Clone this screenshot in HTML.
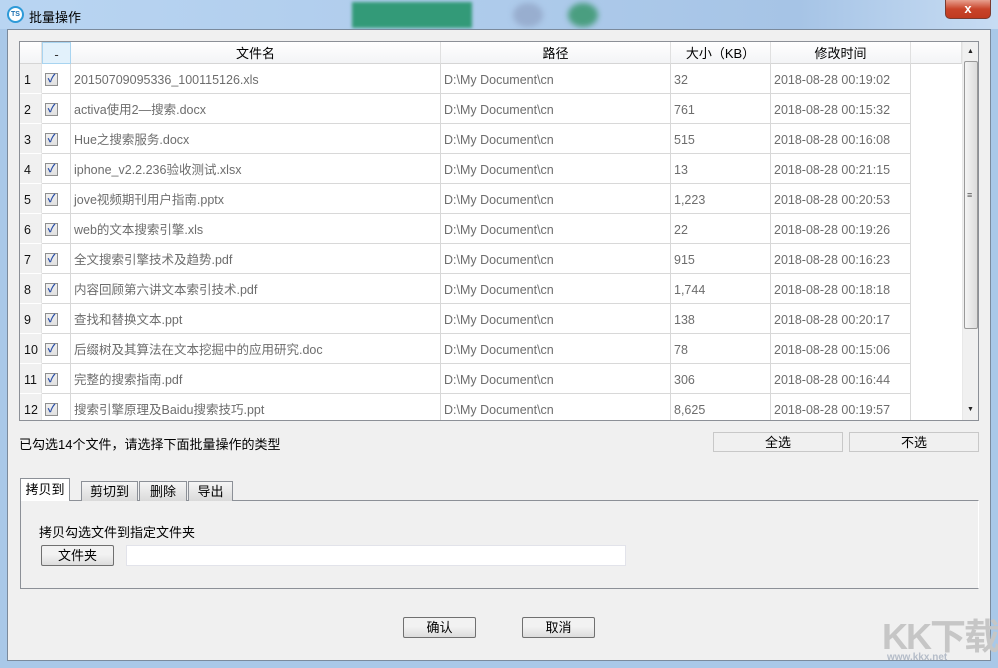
<!DOCTYPE html>
<html><head><meta charset="utf-8"><style>
*{margin:0;padding:0;box-sizing:border-box}
body{width:998px;height:668px;overflow:hidden;background:#a9c8e8;font-family:"Liberation Sans","Noto Sans CJK SC",sans-serif;font-size:12px;color:#000;position:relative}
.a{position:absolute}
.title{left:0;top:0;width:998px;height:29px;background:linear-gradient(90deg,#b9d5f2,#aecbeb 50%,#a6c4e6 80%,#c7dcf3)}
.content{left:7px;top:29px;width:984px;height:632px;background:#f0f0f0;border:1px solid #7b8a9c}
.tbl{left:19px;top:41px;width:960px;height:380px;background:#fff;border:1px solid #8c9097;overflow:hidden}
.hd{top:0;height:22px;background:linear-gradient(#fff,#f3f4f6);border-bottom:1px solid #d5d5d5;text-align:center;line-height:23px;font-size:13px;border-right:1px solid #e0e0e0}
.cell{height:30px;line-height:32px;border-bottom:1px solid #d8d8d8;border-right:1px solid #d8d8d8;color:#6d6d6d;font-size:12.5px;padding-left:3px;white-space:nowrap;overflow:hidden}
.num{color:#111;padding-left:4px;background:#f0f0f0;border-right:1px solid #e4e4e4;border-bottom:1px solid #fff}
.cb{width:13px;height:13px;border:1px solid #8e8f8f;background:linear-gradient(#f0f0f0,#e0e0e0);position:absolute;left:3px;top:9px;color:#2a4fa8;font-size:11px;line-height:11px;text-align:center;font-weight:bold}
.btn{border:1px solid #707070;border-radius:2px;background:linear-gradient(#f2f2f2 45%,#dcdcdc);text-align:center;font-size:13px}
.fbtn{border:1px solid #c8c8c8;background:#f0f0f0;text-align:center;line-height:20px;font-size:13px}
.tab{height:20px;border:1px solid #8c9097;border-bottom:none;background:linear-gradient(#f5f5f5,#dadada);text-align:center;line-height:19px;font-size:13px}
</style></head><body>
<div class="a title"></div>
<div class="a" style="left:7px;top:6px;width:17px;height:17px;border:2px solid #2e9ad8;border-radius:50%;background:#fff;font-size:7px;font-weight:bold;color:#1a6fb0;text-align:center;line-height:13px">TS</div>
<div class="a" style="left:29px;top:7px;font-size:13px">批量操作</div>
<div class="a" style="left:352px;top:2px;width:120px;height:26px;background:#339a78;filter:blur(1.5px)"></div>
<div class="a" style="left:513px;top:3px;width:30px;height:24px;border-radius:50%;background:#98aecf;filter:blur(3px)"></div>
<div class="a" style="left:568px;top:3px;width:30px;height:24px;border-radius:50%;background:#4a9e80;filter:blur(3px)"></div>
<div class="a" style="left:945px;top:0;width:46px;height:19px;background:linear-gradient(#e7a08f,#c9442a 50%,#c03a20);border:1px solid #7a3b30;border-top:none;border-radius:0 0 5px 5px;color:#fff;text-align:center;font-weight:bold;line-height:17px;font-size:13px">x</div>
<div class="a content"></div>
<div class="a tbl">
 <div class="a hd" style="left:0;width:22px"></div>
 <div class="a hd" style="left:22px;width:29px;background:#e2f1fb;border:1px solid #a8d4f0;color:#333">-</div>
 <div class="a hd" style="left:51px;width:370px">文件名</div>
 <div class="a hd" style="left:421px;width:230px">路径</div>
 <div class="a hd" style="left:651px;width:100px">大小（KB）</div>
 <div class="a hd" style="left:751px;width:140px">修改时间</div>
 <div class="a hd" style="left:891px;width:51px"></div>
 <div id="rows"></div>
 <div class="a" style="left:942px;top:0;width:17px;height:378px;background:#f0f0f0;border-left:1px solid #e8e8e8">
  <div class="a" style="left:4px;top:6px;font-size:7px;color:#222">▲</div>
  <div class="a" style="left:1px;top:19px;width:14px;height:268px;border:1px solid #999;border-radius:2px;background:linear-gradient(90deg,#f4f4f4,#dcdcdc)"></div>
  <div class="a" style="left:4px;top:148px;font-size:9px;color:#555">≡</div>
  <div class="a" style="left:4px;top:364px;font-size:7px;color:#222">▼</div>
 </div>
</div>
<div class="a" style="left:19px;top:434px;font-size:13px">已勾选14个文件，请选择下面批量操作的类型</div>
<div class="a fbtn" style="left:713px;top:432px;width:130px;height:20px">全选</div>
<div class="a fbtn" style="left:849px;top:432px;width:130px;height:20px">不选</div>
<div class="a" style="left:20px;top:500px;width:959px;height:89px;border:1px solid #8c9097;border-right-color:#fff;border-bottom-color:#8c9097;background:#f0f0f0"></div>
<div class="a tab" style="left:20px;top:478px;width:50px;height:23px;background:#fff;line-height:22px">拷贝到</div>
<div class="a tab" style="left:81px;top:481px;width:57px">剪切到</div>
<div class="a tab" style="left:139px;top:481px;width:48px">删除</div>
<div class="a tab" style="left:188px;top:481px;width:45px">导出</div>
<div class="a" style="left:39px;top:522px;font-size:13px">拷贝勾选文件到指定文件夹</div>
<div class="a btn" style="left:41px;top:545px;width:73px;height:21px;line-height:19px">文件夹</div>
<div class="a" style="left:126px;top:545px;width:500px;height:21px;background:#fff;border:1px solid #e2e3ea"></div>
<div class="a btn" style="left:403px;top:617px;width:73px;height:21px;line-height:19px">确认</div>
<div class="a btn" style="left:522px;top:617px;width:73px;height:21px;line-height:19px">取消</div>
<div class="a" style="left:882px;top:608px;font-size:36px;font-weight:bold;color:#c6c6c6;letter-spacing:-2px">KK下载</div>
<div class="a" style="left:887px;top:652px;font-size:10px;font-weight:bold;color:#b4bcc8">www.kkx.net</div>
<script>
var d=[["20150709095336_100115126.xls","32","00:19:02"],["activa使用2—搜索.docx","761","00:15:32"],["Hue之搜索服务.docx","515","00:16:08"],["iphone_v2.2.236验收测试.xlsx","13","00:21:15"],["jove视频期刊用户指南.pptx","1,223","00:20:53"],["web的文本搜索引擎.xls","22","00:19:26"],["全文搜索引擎技术及趋势.pdf","915","00:16:23"],["内容回顾第六讲文本索引技术.pdf","1,744","00:18:18"],["查找和替换文本.ppt","138","00:20:17"],["后缀树及其算法在文本挖掘中的应用研究.doc","78","00:15:06"],["完整的搜索指南.pdf","306","00:16:44"],["搜索引擎原理及Baidu搜索技巧.ppt","8,625","00:19:57"]];
var h="";d.forEach(function(r,i){var t=22+i*30;
h+='<div class="a cell num" style="left:0;top:'+t+'px;width:22px">'+(i+1)+'</div>';
h+='<div class="a cell" style="left:22px;top:'+t+'px;width:29px"><div class="cb">✓</div></div>';
h+='<div class="a cell" style="left:51px;top:'+t+'px;width:370px">'+r[0]+'</div>';
h+='<div class="a cell" style="left:421px;top:'+t+'px;width:230px">D:\\My Document\\cn</div>';
h+='<div class="a cell" style="left:651px;top:'+t+'px;width:100px">'+r[1]+'</div>';
h+='<div class="a cell" style="left:751px;top:'+t+'px;width:140px">2018-08-28 '+r[2]+'</div>';});
document.getElementById("rows").innerHTML=h;
</script>
</body></html>
